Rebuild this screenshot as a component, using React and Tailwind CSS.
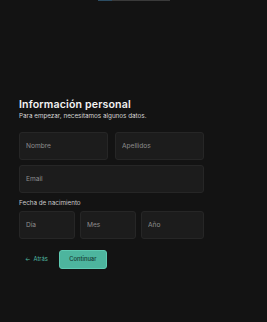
export default function App() {
  const font = { fontFamily: "Inter, 'Noto Sans', sans-serif" };
  const inputCls =
    "h-[28px] w-full rounded-[3px] border border-[#262626] bg-[#1c1c1c] px-[6px] text-[6.6px] text-[#d4d4d4] placeholder:text-[#8e8e8e] outline-none";
  return (
    <div className="w-full h-[322px] bg-[#131313] flex flex-col" style={font}>
      <div className="flex justify-center">
        <div className="w-[72px] h-px bg-[#3a3a3a] flex">
          <div className="w-[14px] h-px bg-[#2c4d63]" />
        </div>
      </div>
      <div className="pl-[19px] w-[204px] pt-[97px] flex flex-col">
        <h1 className="text-[10.6px] leading-[13px] font-semibold text-[#f3f3f3] tracking-[0.15px]">
          Información personal
        </h1>
        <p className="mt-[1px] text-[6.3px] leading-[8px] text-[#d6d6d6]">
          Para empezar, necesitamos algunos datos.
        </p>
        <div className="mt-[12px] grid grid-cols-2 gap-[7px]">
          <input className={inputCls} placeholder="Nombre" />
          <input className={inputCls} placeholder="Apellidos" />
        </div>
        <input className={inputCls + " mt-[5px]"} placeholder="Email" />
        <label className="mt-[6px] text-[6.3px] leading-[8px] text-[#c8c8c8]">
          Fecha de nacimiento
        </label>
        <div className="mt-[4px] grid grid-cols-[56px_56px_63px] gap-[5px]">
          <input className={inputCls} placeholder="Día" />
          <input className={inputCls} placeholder="Mes" />
          <input className={inputCls} placeholder="Año" />
        </div>
        <div className="mt-[11px] flex items-center">
          <button className="ml-[6px] text-[5.8px] text-[#4fb9a1] flex items-center gap-[3px]">
            <span>←</span>
            <span>Atrás</span>
          </button>
          <button className="ml-[11px] h-[19px] w-[48px] rounded-[3px] border border-[#5fcab2] bg-[#4db59e] text-[5.8px] font-medium text-[#153a31]">
            Continuar
          </button>
        </div>
      </div>
    </div>
  );
}
